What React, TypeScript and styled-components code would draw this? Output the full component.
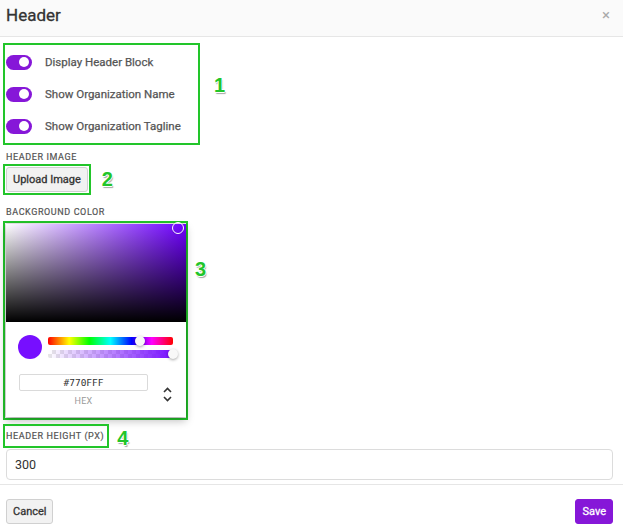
import React from 'react'
import styled, { createGlobalStyle } from 'styled-components'

const GlobalStyle = createGlobalStyle`
    html, body {
        margin: 0;
        padding: 0;
        background: #fff;
    }
    body {
        font-family: Roboto, "Noto Sans", "Liberation Sans", sans-serif;
        color: #333;
    }
    * {
        box-sizing: border-box;
    }
`

const PURPLE = '#8617d8'
const MARK = '#22c52a'
const HUE = 266

const Modal = styled.div`
    width: 623px;
    height: 530px;
    display: flex;
    flex-direction: column;
    background: #fff;
`

const TopBar = styled.div`
    height: 37px;
    flex: none;
    display: flex;
    align-items: flex-start;
    justify-content: space-between;
    padding: 5px 13px 0 6px;
    background: #fafafa;
    border-bottom: 1px solid #e6e6e6;
`

const Title = styled.h1`
    margin: 0;
    font-size: 17px;
    font-weight: 400;
    color: #333;
    -webkit-text-stroke: 0.3px #333;
`

const Close = styled.span`
    margin-top: 3px;
    font-size: 15px;
    color: #aaa;
    line-height: 1;
`

const Body = styled.div`
    flex: 1;
    display: flex;
    flex-direction: column;
    align-items: flex-start;
    padding: 6px 10px 0 6px;
`

// green annotation frame with its number sticker
const Marked = styled.div<{ $pad?: string; $mt?: number }>`
    position: relative;
    margin: ${(p) => p.$mt || 0}px 0 0 -3px;
    padding: ${(p) => p.$pad || '1px'};
    border: 2px solid ${MARK};
`

const Sticker = styled.span<{ $left: number; $top: number }>`
    position: absolute;
    left: calc(100% + ${(p) => p.$left}px);
    top: ${(p) => p.$top}px;
    font-family: "Liberation Sans", Arial, sans-serif;
    font-size: 20px;
    font-weight: 700;
    line-height: 1;
    color: ${MARK};
    text-shadow: 1px 0 0 #fff, -1px 0 0 #fff, 0 1px 0 #fff, 0 -1px 0 #fff,
        1px 2px 1px rgba(0, 0, 0, 0.35);
`

const ToggleList = styled.div`
    width: 191px;
    display: flex;
    flex-direction: column;
`

const ToggleRow = styled.label`
    height: 32px;
    display: flex;
    align-items: center;
    gap: 13px;
    font-size: 11.5px;
    font-weight: 400;
    color: #555;
    -webkit-text-stroke: 0.25px #555;
`

const Switch = styled.span<{ $on: boolean }>`
    width: 26px;
    height: 15px;
    border-radius: 8px;
    background: ${(p) => (p.$on ? PURPLE : '#ccc')};
    display: flex;
    align-items: center;
    justify-content: ${(p) => (p.$on ? 'flex-end' : 'flex-start')};
    padding: 0 3px;

    &::after {
        content: '';
        width: 10px;
        height: 10px;
        border-radius: 50%;
        background: #fff;
    }
`

const FieldLabel = styled.div<{ $mt?: number }>`
    margin-top: ${(p) => p.$mt || 0}px;
    font-size: 9px;
    font-weight: 400;
    letter-spacing: 0.6px;
    text-transform: uppercase;
    color: #555;
    -webkit-text-stroke: 0.2px #555;
`

const Button = styled.button<{ $primary?: boolean }>`
    height: 25px;
    padding: 0 6px;
    border-radius: 3px;
    font-family: inherit;
    font-size: 11px;
    font-weight: 400;
    cursor: pointer;
    border: 1px solid ${(p) => (p.$primary ? PURPLE : '#d0d0d0')};
    background: ${(p) => (p.$primary ? PURPLE : '#f2f2f2')};
    color: ${(p) => (p.$primary ? '#fff' : '#333')};
    -webkit-text-stroke: 0.3px ${(p) => (p.$primary ? '#fff' : '#333')};
`

const Picker = styled.div`
    width: 180px;
    background: #fff;
    box-shadow: 0 0 2px rgba(0, 0, 0, 0.3), 0 4px 8px rgba(0, 0, 0, 0.25);
`

const Saturation = styled.div<{ $hue: number }>`
    position: relative;
    height: 98px;
    background: linear-gradient(to top, #000, rgba(0, 0, 0, 0)),
        linear-gradient(to right, #fff, hsl(${(p) => p.$hue}, 100%, 50%));
`

const SatPointer = styled.span`
    position: absolute;
    right: 2px;
    top: -2px;
    width: 12px;
    height: 12px;
    border-radius: 50%;
    border: 1px solid #fff;
    box-shadow: 0 0 1px rgba(0, 0, 0, 0.4);
`

const PickerBody = styled.div`
    padding: 13px 13px 11px 12px;
`

const Controls = styled.div`
    display: flex;
    align-items: center;
    gap: 6px;
`

const Swatch = styled.span<{ $color: string }>`
    width: 24px;
    height: 24px;
    flex: none;
    border-radius: 50%;
    background: ${(p) => p.$color};
`

const Sliders = styled.div`
    flex: 1;
    display: flex;
    flex-direction: column;
    gap: 5px;
`

const Track = styled.div`
    position: relative;
    height: 8px;
    border-radius: 2px;
`

const HueTrack = styled(Track)`
    background: linear-gradient(to right, #f00 0%, #ff0 17%, #0f0 33%, #0ff 50%, #00f 67%, #f0f 83%, #f00 100%);
`

const AlphaTrack = styled(Track)<{ $color: string }>`
    background: linear-gradient(to right, rgba(119, 15, 255, 0), ${(p) => p.$color}),
        repeating-conic-gradient(#e6e6e6 0% 25%, #fff 0% 50%) 0 0 / 8px 8px;
`

const Thumb = styled.span`
    position: absolute;
    top: -1px;
    width: 10px;
    height: 10px;
    margin-left: -5px;
    border-radius: 50%;
    background: #f8f8f8;
    box-shadow: 0 1px 3px rgba(0, 0, 0, 0.35);
`

const Fields = styled.div`
    display: flex;
    margin: 15px -13px 0 1px;
`

const HexField = styled.div`
    width: 129px;
    display: flex;
    flex-direction: column;
    align-items: center;
    gap: 5px;
`

const HexInput = styled.input`
    width: 100%;
    height: 17px;
    border: 1px solid #dadada;
    border-radius: 2px;
    text-align: center;
    font-family: "DejaVu Sans Mono", "Liberation Mono", monospace;
    font-size: 9.5px;
    color: #333;
    outline: none;
`

const HexLabel = styled.span`
    font-size: 9px;
    color: #9a9a9a;
    letter-spacing: 0.3px;
`

const Arrows = styled.div`
    flex: 1;
    display: flex;
    flex-direction: column;
    align-items: center;
    justify-content: center;
    gap: 3px;
    padding-top: 9px;
`

const Input = styled.input`
    width: 100%;
    height: 31px;
    margin-top: 1px;
    padding: 0 8px;
    border: 1px solid #dcdcdc;
    border-radius: 4px;
    font-family: inherit;
    font-size: 12.5px;
    color: #333;
    outline: none;
`

const Footer = styled.div`
    height: 46px;
    flex: none;
    display: flex;
    align-items: center;
    justify-content: space-between;
    padding: 8px 10px 0 6px;
    border-top: 1px solid #e6e6e6;
`

const toggles = ['Display Header Block', 'Show Organization Name', 'Show Organization Tagline']

function Chevron({ up }: { up?: boolean }) {
    return (
        <svg width="9" height="6" viewBox="0 0 9 6">
            <path
                d={up ? 'M1 5 L4.5 1.5 L8 5' : 'M1 1 L4.5 4.5 L8 1'}
                fill="none"
                stroke="#333"
                strokeWidth="1.6"
            />
        </svg>
    )
}

function ColorPicker({ hex, hue }: { hex: string; hue: number }) {
    return (
        <Picker>
            <Saturation $hue={hue}>
                <SatPointer />
            </Saturation>
            <PickerBody>
                <Controls>
                    <Swatch $color={hex} />
                    <Sliders>
                        <HueTrack>
                            <Thumb style={{ left: `${(hue / 360) * 100}%` }} />
                        </HueTrack>
                        <AlphaTrack $color={hex}>
                            <Thumb style={{ left: '100%' }} />
                        </AlphaTrack>
                    </Sliders>
                </Controls>
                <Fields>
                    <HexField>
                        <HexInput readOnly value={hex.toUpperCase()} />
                        <HexLabel>HEX</HexLabel>
                    </HexField>
                    <Arrows>
                        <Chevron up />
                        <Chevron />
                    </Arrows>
                </Fields>
            </PickerBody>
        </Picker>
    )
}

export default function App() {
    return (
        <Modal>
            <GlobalStyle />
            <TopBar>
                <Title>Header</Title>
                <Close>×</Close>
            </TopBar>
            <Body>
                <Marked>
                    <ToggleList>
                        {toggles.map((label) => (
                            <ToggleRow key={label}>
                                <Switch $on />
                                {label}
                            </ToggleRow>
                        ))}
                    </ToggleList>
                    <Sticker $left={16} $top={30}>1</Sticker>
                </Marked>

                <FieldLabel $mt={7}>Header Image</FieldLabel>
                <Marked $mt={2}>
                    <Button>Upload Image</Button>
                    <Sticker $left={13} $top={3}>2</Sticker>
                </Marked>

                <FieldLabel $mt={12}>Background Color</FieldLabel>
                <Marked $pad="1px 0 1px 1px" $mt={4}>
                    <ColorPicker hex="#770fff" hue={HUE} />
                    <Sticker $left={9} $top={36}>3</Sticker>
                </Marked>

                <Marked $pad="5px 3px 5px 1px" $mt={4}>
                    <FieldLabel>Header Height (px)</FieldLabel>
                    <Sticker $left={10} $top={2}>4</Sticker>
                </Marked>
                <Input readOnly value="300" />
            </Body>
            <Footer>
                <Button>Cancel</Button>
                <Button $primary>Save</Button>
            </Footer>
        </Modal>
    )
}
